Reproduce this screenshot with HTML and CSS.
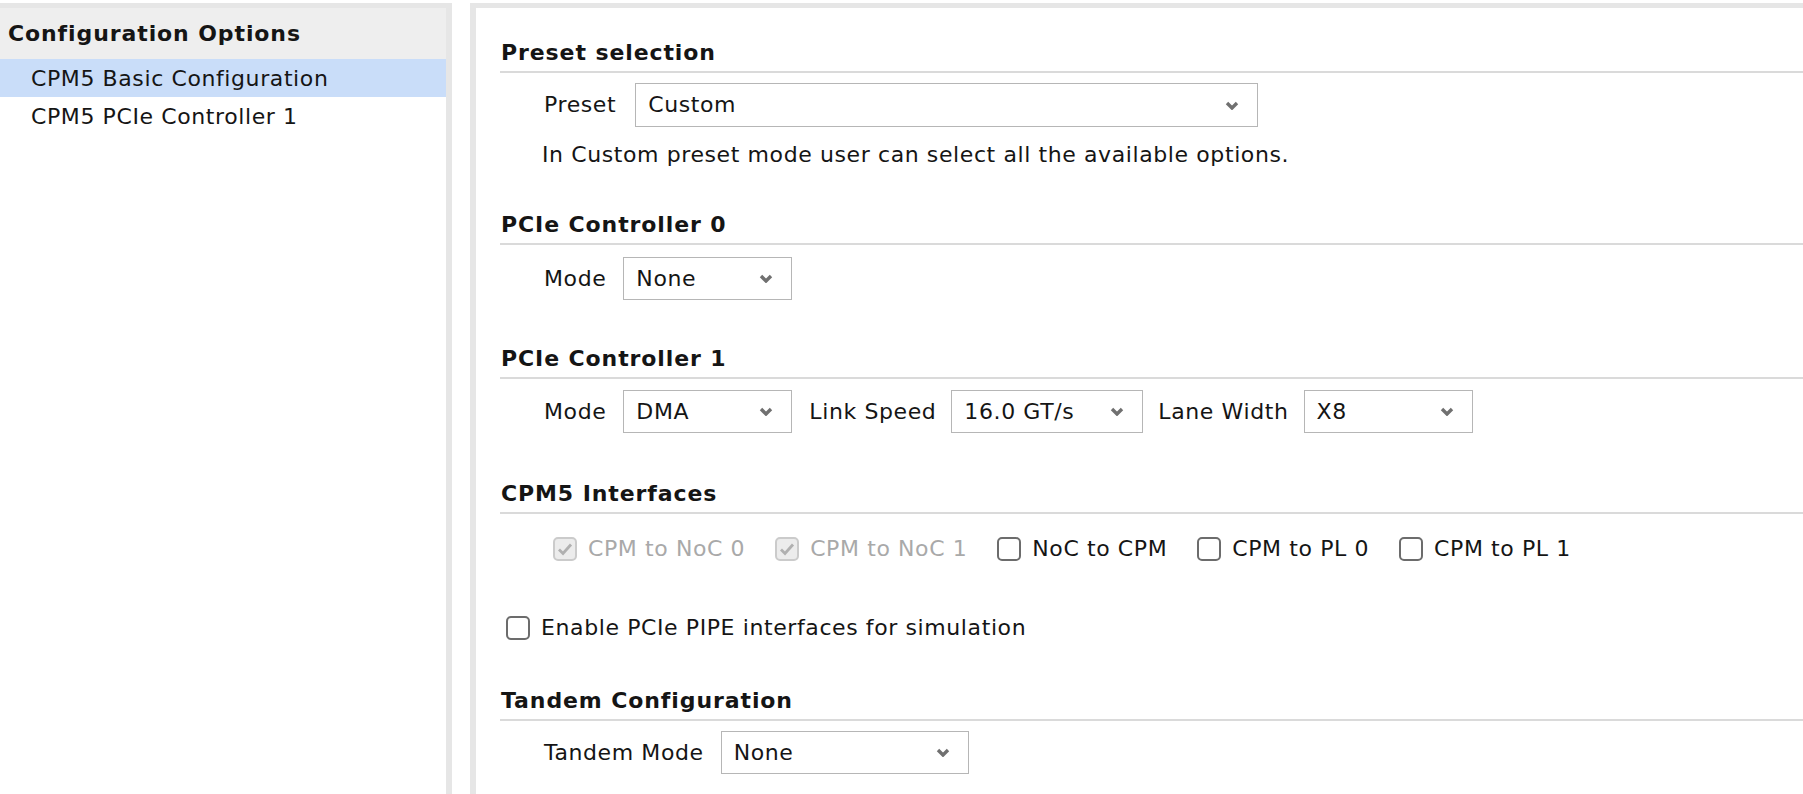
FILE: index.html
```html
<!DOCTYPE html>
<html lang="en">
  <head>
    <meta charset="UTF-8" />
    <meta name="viewport" content="width=device-width, initial-scale=1.0"/>
    <title>CPM5 Configuration</title>
    <link rel="stylesheet" href="styles.css">
  </head>
  <body>
    <div class="frame">

      <!-- Left: option tree -->
      <div class="side-panel">
        <div class="side-header">Configuration Options</div>
        <div class="side-item selected">CPM5 Basic Configuration</div>
        <div class="side-item">CPM5 PCIe Controller 1</div>
      </div>

      <!-- Right: settings page -->
      <div class="main-panel">

        <div class="section first">
          <div class="section-title">Preset selection</div>
          <div class="field-row">
            <span class="label">Preset</span>
            <div class="select w-preset">
              <span>Custom</span>
              <svg class="chevron" width="14" height="9" viewBox="0 0 14 9"><polyline points="2,2 7,7 12,2" /></svg>
            </div>
          </div>
          <p class="hint">In Custom preset mode user can select all the available options.</p>
        </div>

        <div class="section ctrl0">
          <div class="section-title">PCIe Controller 0</div>
          <div class="field-row">
            <span class="label">Mode</span>
            <div class="select w-small">
              <span>None</span>
              <svg class="chevron" width="14" height="9" viewBox="0 0 14 9"><polyline points="2,2 7,7 12,2" /></svg>
            </div>
          </div>
        </div>

        <div class="section ctrl1">
          <div class="section-title">PCIe Controller 1</div>
          <div class="field-row">
            <span class="label">Mode</span>
            <div class="select w-small spaced">
              <span>DMA</span>
              <svg class="chevron" width="14" height="9" viewBox="0 0 14 9"><polyline points="2,2 7,7 12,2" /></svg>
            </div>
            <span class="label spaced">Link Speed</span>
            <div class="select w-speed">
              <span>16.0 GT/s</span>
              <svg class="chevron" width="14" height="9" viewBox="0 0 14 9"><polyline points="2,2 7,7 12,2" /></svg>
            </div>
            <span class="label">Lane Width</span>
            <div class="select w-small">
              <span>X8</span>
              <svg class="chevron" width="14" height="9" viewBox="0 0 14 9"><polyline points="2,2 7,7 12,2" /></svg>
            </div>
          </div>
        </div>

        <div class="section ifaces">
          <div class="section-title">CPM5 Interfaces</div>
          <div class="check-row">
            <label class="check disabled">
              <span class="box"><svg width="16" height="14" viewBox="0 0 16 14"><polyline points="2,7.5 6,11.5 14,2.5" /></svg></span>
              CPM to NoC 0
            </label>
            <label class="check disabled">
              <span class="box"><svg width="16" height="14" viewBox="0 0 16 14"><polyline points="2,7.5 6,11.5 14,2.5" /></svg></span>
              CPM to NoC 1
            </label>
            <label class="check"><span class="box"></span>NoC to CPM</label>
            <label class="check"><span class="box"></span>CPM to PL 0</label>
            <label class="check"><span class="box"></span>CPM to PL 1</label>
          </div>
          <div class="check-row single">
            <label class="check"><span class="box"></span>Enable PCIe PIPE interfaces for simulation</label>
          </div>
        </div>

        <div class="section tandem">
          <div class="section-title">Tandem Configuration</div>
          <div class="field-row">
            <span class="label">Tandem Mode</span>
            <div class="select w-tandem">
              <span>None</span>
              <svg class="chevron" width="14" height="9" viewBox="0 0 14 9"><polyline points="2,2 7,7 12,2" /></svg>
            </div>
          </div>
        </div>

      </div>
    </div>
  </body>
</html>
```

FILE: styles.css
```css
html, body {
  margin: 0;
  height: 100%;
  overflow: hidden;
}

body {
  background-color: white;
  color: #151515;
  font-family: "DejaVu Sans", Verdana, sans-serif;
  font-size: 22px;
  line-height: 26px;
  letter-spacing: 0.6px;
}

.frame {
  display: flex;
  height: 100%;
  padding-top: 3px;
  box-sizing: border-box;
}

/* left tree */
.side-panel {
  width: 446px;
  flex-shrink: 0;
  border-top: 5px solid #e6e6e6;
  border-right: 6px solid #e6e6e6;
  background-color: white;
}

.side-header {
  height: 51px;
  line-height: 51px;
  padding-left: 8px;
  background-color: #eeeeee;
  font-weight: bold;
  letter-spacing: 0.9px;
}

.side-item {
  height: 38px;
  line-height: 40px;
  padding-left: 31px;
  white-space: nowrap;
}

.side-item.selected {
  background-color: #c9ddf9;
}

/* right page */
.main-panel {
  flex: 1;
  margin-left: 18px;
  border-top: 5px solid #e6e6e6;
  border-left: 6px solid #e6e6e6;
  padding-left: 24px;
}

.section-title {
  font-weight: bold;
  letter-spacing: 0.9px;
  padding-left: 1px;
  padding-bottom: 5px;
  border-bottom: 2px solid #dadada;
}

.section.first { margin-top: 32px; }
.section.ctrl0 { margin-top: 44px; }
.section.ctrl1 { margin-top: 46px; }
.section.ifaces { margin-top: 48px; }
.section.tandem { margin-top: 38px; }

.field-row {
  display: flex;
  align-items: center;
  gap: 17px;
  margin-top: 10px;
  padding-left: 44px;
}

.ctrl0 .field-row { margin-top: 12px; }
.ctrl1 .field-row { margin-top: 11px; gap: 15px; }
.tandem .field-row { margin-top: 10px; }

.first .field-row { gap: 19px; }

.ctrl1 .spaced { margin-left: 2px; }

.label {
  white-space: nowrap;
}

.select {
  height: 44px;
  flex-shrink: 0;
  box-sizing: border-box;
  border: 1px solid #b6b6b6;
  background-color: white;
  display: flex;
  align-items: center;
  justify-content: space-between;
  padding: 0 18px 0 12px;
}

.ctrl0 .select,
.ctrl1 .select,
.tandem .select {
  height: 43px;
}

.chevron polyline {
  fill: none;
  stroke: #707070;
  stroke-width: 3.4;
}

.w-preset { width: 623px; }
.w-small { width: 169px; }
.w-speed { width: 192px; }
.w-tandem { width: 248px; }

.hint {
  margin: 15px 0 0 42px;
}

/* checkboxes */
.check-row {
  display: flex;
  align-items: center;
  gap: 30px;
  height: 44px;
  margin-top: 13px;
  padding-left: 53px;
}

.check-row.single {
  margin-top: 35px;
  padding-left: 6px;
}

.check {
  display: flex;
  align-items: center;
  gap: 11px;
  white-space: nowrap;
}

.box {
  width: 24px;
  height: 24px;
  box-sizing: border-box;
  border: 2px solid #6c6c6c;
  border-radius: 5px;
  background-color: white;
  display: flex;
  align-items: center;
  justify-content: center;
}

.check.disabled {
  color: #a9a9a9;
}

.check.disabled .box {
  border-color: #cbcbcb;
  background-color: #ececec;
}

.box polyline {
  fill: none;
  stroke: #b0b0b0;
  stroke-width: 2.8;
}
```
